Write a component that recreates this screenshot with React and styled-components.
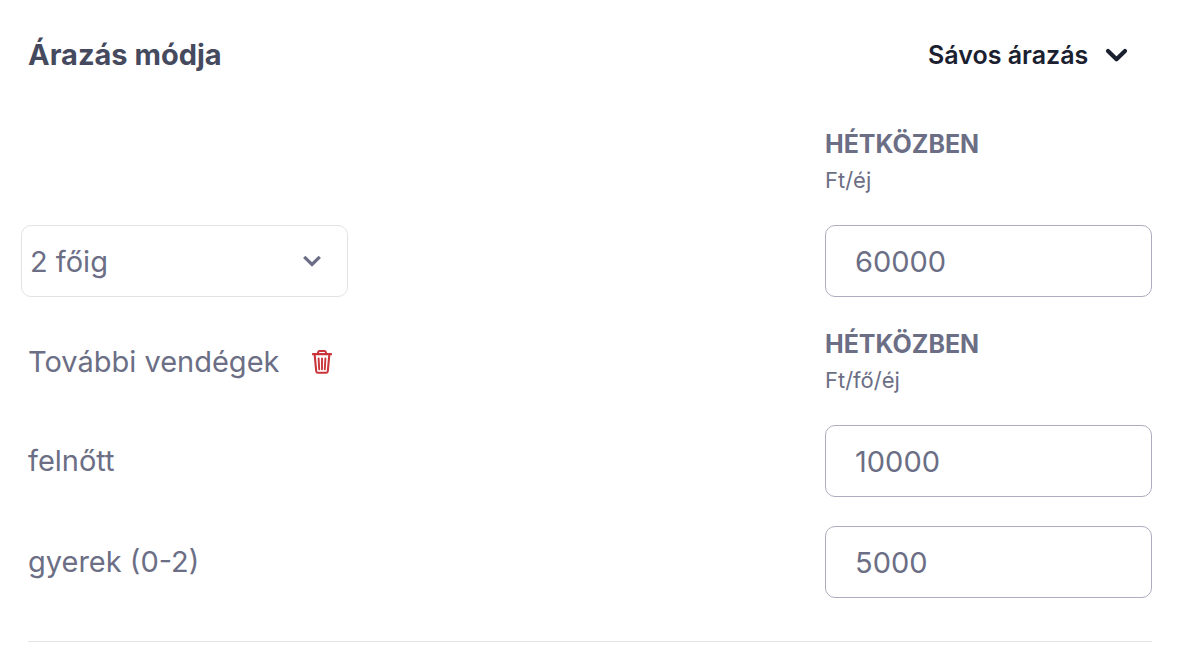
import React from 'react';
import styled, { createGlobalStyle } from 'styled-components';

const GlobalStyle = createGlobalStyle`
  *, *::before, *::after { box-sizing: border-box; }
  body { margin: 0; background: #ffffff; }
`;

const Panel = styled.form`
  font-family: Inter, 'Liberation Sans', sans-serif;
  color: #6b6e85;
  margin: 0 28px;
  padding: 37px 0 14px;
  border-bottom: 1px solid #e4e4e7;
`;

const Header = styled.header`
  display: flex;
  align-items: center;
  justify-content: space-between;
  padding-bottom: 53px;
`;

const Title = styled.h2`
  margin: 0;
  font-size: 29px;
  line-height: 36px;
  font-weight: 700;
  color: #454a5e;
`;

const SelectWrap = styled.div`
  display: grid;
  align-items: center;
  justify-items: end;

  & > * { grid-area: 1 / 1; }
  & > svg { pointer-events: none; }
`;

const ModeWrap = styled(SelectWrap)`
  padding-right: 23px;
`;

const GuestWrap = styled(SelectWrap)`
  width: 327px;
  margin-left: -7px;

  & > svg { margin-right: 24px; }
`;

const BaseSelect = styled.select`
  appearance: none;
  margin: 0;
  background: transparent;
  font-family: inherit;
  cursor: pointer;
`;

const ModeSelect = styled(BaseSelect)`
  border: 0;
  padding: 0 40px 0 0;
  font-size: 25px;
  line-height: 36px;
  font-weight: 600;
  color: #1a202f;
`;

const GuestSelect = styled(BaseSelect)`
  width: 100%;
  height: 72px;
  padding: 0 60px 0 8px;
  border: 1px solid #e2e2e6;
  border-radius: 10px;
  font-size: 29px;
  color: inherit;
`;

const Row = styled.div`
  display: grid;
  grid-template-columns: minmax(0, 1fr) 327px;
  align-items: center;
  min-height: 72px;
  margin-bottom: ${({ $gap }) => $gap}px;
`;

const Label = styled.label`
  font-size: 29px;
  line-height: 36px;
`;

const GuestsHeading = styled.div`
  display: flex;
  align-items: center;
  gap: 29px;
  font-size: 29px;
  line-height: 36px;
`;

const DeleteButton = styled.button`
  display: flex;
  padding: 4px;
  border: 0;
  background: none;
  color: #c9353a;
  cursor: pointer;
`;

const PriceHead = styled.div`
  grid-column: 2;
  line-height: 36px;
`;

const Period = styled.div`
  font-size: 25px;
  font-weight: 700;
`;

const Unit = styled.div`
  font-size: 22px;
`;

const PriceInput = styled.input`
  grid-column: 2;
  width: 100%;
  height: 72px;
  margin: 0;
  padding: 0 29px;
  border: 1px solid #adadbf;
  border-radius: 10px;
  background: #ffffff;
  font-family: inherit;
  font-size: 29px;
  color: inherit;
`;

function Chevron({ width, height, d, weight, color, round }) {
  return (
    <svg width={width} height={height} viewBox={`0 0 ${width} ${height}`} fill="none" aria-hidden="true">
      <path
        d={d}
        stroke={color}
        strokeWidth={weight}
        strokeLinecap={round ? 'round' : 'butt'}
        strokeLinejoin={round ? 'round' : 'miter'}
      />
    </svg>
  );
}

function TrashIcon() {
  return (
    <svg width="20" height="24" viewBox="0 0 20 24" fill="none" stroke="currentColor" aria-hidden="true">
      <path d="M1 4.1H19" strokeWidth="2.2" strokeLinecap="round" />
      <path d="M5.6 3.6L6.4 1.7Q6.8 1 7.6 1H12.4Q13.2 1 13.6 1.7L14.4 3.6" strokeWidth="2" />
      <path d="M2.7 5L4.2 21.2Q4.4 22.8 6 22.8H14Q15.6 22.8 15.8 21.2L17.3 5" strokeWidth="2.1" />
      <path d="M6.6 8.4L7.2 19.2M10 8.4V19.2M13.4 8.4L12.8 19.2" strokeWidth="1.9" strokeLinecap="round" />
    </svg>
  );
}

function PriceHeading({ unit }) {
  return (
    <PriceHead>
      <Period>HÉTKÖZBEN</Period>
      <Unit>{unit}</Unit>
    </PriceHead>
  );
}

export default function App() {
  return (
    <>
      <GlobalStyle />
      <Panel>
        <Header>
          <Title>Árazás módja</Title>
          <ModeWrap>
            <ModeSelect aria-label="Árazás módja" defaultValue="tiered">
              <option value="tiered">Sávos árazás</option>
            </ModeSelect>
            <Chevron width={25} height={16} d="M4 4L12.5 12.2L21 4" color="#1a202f" weight={4.2} round />
          </ModeWrap>
        </Header>

        <Row $gap={27}>
          <PriceHeading unit="Ft/éj" />
        </Row>
        <Row $gap={29}>
          <GuestWrap>
            <GuestSelect aria-label="Vendégek száma" defaultValue="2">
              <option value="2">2 főig</option>
            </GuestSelect>
            <Chevron width={24} height={16} d="M4.2 3.8L12 11.5L19.8 3.8" color="#6b6e85" weight={3.2} />
          </GuestWrap>
          <PriceInput aria-label="Ft/éj" inputMode="numeric" defaultValue="60000" />
        </Row>

        <Row $gap={27}>
          <GuestsHeading>
            További vendégek
            <DeleteButton type="button" aria-label="Törlés">
              <TrashIcon />
            </DeleteButton>
          </GuestsHeading>
          <PriceHeading unit="Ft/fő/éj" />
        </Row>
        <Row $gap={29}>
          <Label htmlFor="adult">felnőtt</Label>
          <PriceInput id="adult" inputMode="numeric" defaultValue="10000" />
        </Row>
        <Row $gap={29}>
          <Label htmlFor="child">gyerek (0-2)</Label>
          <PriceInput id="child" inputMode="numeric" defaultValue="5000" />
        </Row>
      </Panel>
    </>
  );
}
